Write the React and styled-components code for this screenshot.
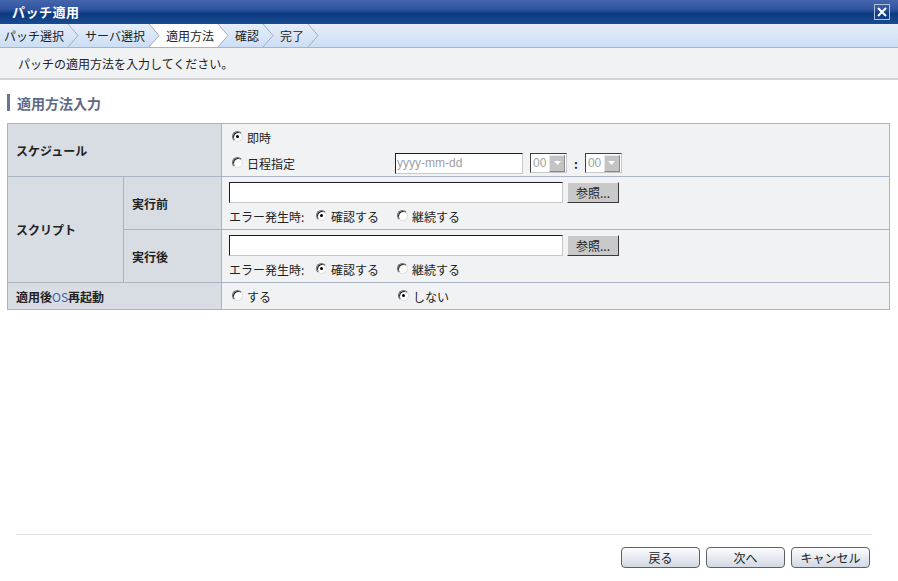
import React from 'react'
import styled, { createGlobalStyle } from 'styled-components'

const Global = createGlobalStyle`
  html, body { margin: 0; padding: 0; background: #ffffff; }
  body {
    font-family: "Noto Sans CJK JP", "DejaVu Sans", sans-serif;
    font-size: 12px;
    color: #222;
  }
  #root { height: 581px; }
`

const Page = styled.div`
  height: 581px;
  display: flex;
  flex-direction: column;
`

const TitleBar = styled.div`
  height: 23px;
  display: flex;
  align-items: center;
  justify-content: space-between;
  padding: 0 8px 0 12px;
  background: linear-gradient(#4466ad 0%, #2f55a0 40%, #0c3a80 60%, #184a90 100%);
  border-bottom: 1px solid #30466f;
`

const Title = styled.div`
  color: #ffffff;
  font-weight: bold;
  font-size: 13px;
  letter-spacing: 0.5px;
`

const CloseBox = styled.div`
  width: 14px;
  height: 14px;
  border: 1px solid #b4c2dc;
  display: flex;
  align-items: center;
  justify-content: center;
`

const Crumbs = styled.div`
  height: 23px;
  display: flex;
  align-items: stretch;
  background: linear-gradient(#e5eef9, #ccdef5);
  border-bottom: 1px solid #a9b3c3;
`

const Crumb = styled.div`
  display: flex;
  align-items: center;
  padding: 0 3px 0 ${p => (p.$first ? 4 : 6)}px;
  background: ${p => (p.$active ? '#ffffff' : 'transparent')};
  color: #222;
  white-space: nowrap;
`

const Message = styled.div`
  height: 30px;
  display: flex;
  align-items: center;
  padding-left: 18px;
  background: #f1f2f4;
  border-bottom: 2px solid #d2d4d6;
`

const Main = styled.div`
  flex: 1;
  padding: 14px 8px 0 7px;
`

const SectionTitle = styled.div`
  display: flex;
  align-items: center;
  height: 17px;
  border-left: 3px solid #6b7591;
  padding-left: 7px;
  color: #5e6985;
  font-weight: bold;
  font-size: 14px;
  margin-bottom: 12px;
`

const Table = styled.table`
  width: 100%;
  border-collapse: collapse;
  table-layout: fixed;
`

const Th = styled.th`
  background: #d8dce3;
  border: 1px solid #abb4c3;
  text-align: left;
  font-weight: bold;
  padding: 0 0 0 8px;
  height: ${p => (p.$h ? p.$h + 'px' : 'auto')};
  color: #222;
`

const Td = styled.td`
  background: #f1f2f4;
  border: 1px solid #abb4c3;
  padding: 0 0 0 7px;
  height: ${p => (p.$h ? p.$h + 'px' : 'auto')};
  vertical-align: middle;
`

const Line = styled.div`
  display: flex;
  align-items: ${p => (p.$top ? 'flex-start' : 'center')};
  padding-top: ${p => (p.$top ? 3 : 0)}px;
  height: ${p => p.$h || 24}px;
  box-sizing: border-box;
`

const RadioItem = styled.label`
  display: inline-flex;
  align-items: center;
  width: ${p => (p.$w ? p.$w + 'px' : 'auto')};
  flex-shrink: 0;
  white-space: nowrap;
`

const RadioDot = styled.span`
  width: 9px;
  height: 9px;
  border-radius: 50%;
  border-top: 1px solid #6f6f6f;
  border-left: 1px solid #6f6f6f;
  border-right: 1px solid #e2e2e2;
  border-bottom: 1px solid #e2e2e2;
  background: #ffffff;
  box-shadow: inset 1px 1px 0 #2a2a2a;
  margin: 0 4px 2px 3px;
  display: inline-flex;
  align-items: center;
  justify-content: center;
  &::after {
    content: '';
    width: 3px;
    height: 3px;
    border-radius: 50%;
    background: ${p => (p.$on ? '#000' : 'transparent')};
  }
`

const Label = styled.span`
  width: ${p => p.$w}px;
  flex-shrink: 0;
`

const Gap = styled.span`
  width: ${p => p.$w}px;
  flex-shrink: 0;
`

const TextBox = styled.div`
  width: ${p => p.$w}px;
  height: 19px;
  background: #ffffff;
  border-top: 1px solid #1e1e1e;
  border-left: 1px solid #1e1e1e;
  border-right: 1px solid #c8c8c8;
  border-bottom: 1px solid #c8c8c8;
  color: #a0a0a8;
  display: flex;
  align-items: center;
  padding-left: 1px;
  font-family: "Liberation Sans", "Noto Sans", sans-serif;
  font-size: 12px;
`

const Select = styled.div`
  width: 32px;
  height: 18px;
  background: #ffffff;
  border-top: 1px solid #404040;
  border-left: 1px solid #404040;
  border-right: 1px solid #c8c8c8;
  border-bottom: 1px solid #c8c8c8;
  display: flex;
  align-items: center;
  justify-content: space-between;
  padding: 0 1px 0 2px;
  color: #a0a0a0;
  font-family: "Liberation Sans", sans-serif;
`

const SelectArrow = styled.span`
  width: 14px;
  height: 15px;
  background: #c4c4c4;
  border: 1px solid #e8e8e8;
  border-right-color: #888;
  border-bottom-color: #888;
  display: flex;
  align-items: center;
  justify-content: center;
`

const Colon = styled.span`
  font-weight: bold;
  margin: 0 7px;
`

const BrowseButton = styled.button`
  width: 52px;
  height: 21px;
  margin-left: 4px;
  background: #c9c9c9;
  border: 1px solid;
  border-color: #f4f4f4 #3a3a3a #3a3a3a #f4f4f4;
  font-family: "Noto Sans CJK JP", sans-serif;
  font-size: 12px;
  color: #222;
  padding: 0;
`

const OsText = styled.span`
  color: #3a5fa8;
  font-weight: normal;
`

const Footer = styled.div`
  padding: 0 26px 13px 16px;
`

const Divider = styled.div`
  height: 1px;
  background: #d9dfe2;
  margin-bottom: 12px;
`

const Buttons = styled.div`
  display: flex;
  justify-content: flex-end;
  gap: 6px;
  padding-right: 2px;
`

const PushButton = styled.button`
  width: 79px;
  height: 21px;
  border: 1px solid #5a5f6a;
  border-radius: 4px;
  background: linear-gradient(#fdfdfe, #e4e8ef 55%, #d3d9e3);
  font-family: "Noto Sans CJK JP", sans-serif;
  font-size: 12px;
  color: #222;
  padding: 0;
`

const Chevron = ({ left, right }) => (
  <svg width="12" height="23" viewBox="0 0 12 23" style={{ flexShrink: 0 }}>
    {left && <polygon points="0,0 1,0 11,11.5 1,23 0,23" fill="#ffffff" />}
    {right && <polygon points="1,0 12,0 12,23 1,23 11,11.5" fill="#ffffff" />}
    <polyline points="1,0 11,11.5 1,23" fill="none" stroke="#a3abbb" strokeWidth="1" />
  </svg>
)

const Radio = ({ on, w, children }) => (
  <RadioItem $w={w}>
    <RadioDot $on={on} />
    {children}
  </RadioItem>
)

const DropArrow = () => (
  <SelectArrow>
    <svg width="7" height="4" viewBox="0 0 7 4"><polygon points="0,0 7,0 3.5,4" fill="#ffffff" /></svg>
  </SelectArrow>
)

const steps = ['パッチ選択', 'サーバ選択', '適用方法', '確認', '完了']
const activeStep = 2

const ScriptCell = () => (
  <Td $h={52}>
    <Line $h={27} $top>
      <TextBox $w={331} />
      <BrowseButton>参照...</BrowseButton>
    </Line>
    <Line $h={22}>
      <Label $w={84}>エラー発生時:</Label>
      <Radio on w={81}>確認する</Radio>
      <Radio>継続する</Radio>
    </Line>
  </Td>
)

export default function App() {
  return (
    <Page>
      <Global />
      <TitleBar>
        <Title>パッチ適用</Title>
        <CloseBox>
          <svg width="10" height="10" viewBox="0 0 10 10">
            <path d="M1 1 L9 9 M9 1 L1 9" stroke="#ffffff" strokeWidth="2" />
          </svg>
        </CloseBox>
      </TitleBar>
      <Crumbs>
        {steps.map((s, i) => (
          <React.Fragment key={s}>
            <Crumb $first={i === 0} $active={i === activeStep}>{s}</Crumb>
            <Chevron left={i === activeStep} right={i + 1 === activeStep} />
          </React.Fragment>
        ))}
      </Crumbs>
      <Message>パッチの適用方法を入力してください。</Message>
      <Main>
        <SectionTitle>適用方法入力</SectionTitle>
        <Table>
          <colgroup>
            <col style={{ width: 116 }} />
            <col style={{ width: 98 }} />
            <col />
          </colgroup>
          <tbody>
            <tr>
              <Th colSpan={2} $h={52}>スケジュール</Th>
              <Td $h={52}>
                <Line $h={26}>
                  <Radio on>即時</Radio>
                </Line>
                <Line $h={26}>
                  <Radio w={166}>日程指定</Radio>
                  <TextBox $w={125}>yyyy-mm-dd</TextBox>
                  <Gap $w={7} />
                  <Select>
                    00
                    <DropArrow />
                  </Select>
                  <Colon>:</Colon>
                  <Select>
                    00
                    <DropArrow />
                  </Select>
                </Line>
              </Td>
            </tr>
            <tr>
              <Th rowSpan={2}>スクリプト</Th>
              <Th>実行前</Th>
              <ScriptCell />
            </tr>
            <tr>
              <Th>実行後</Th>
              <ScriptCell />
            </tr>
            <tr>
              <Th colSpan={2} $h={26}>
                適用後<OsText>OS</OsText>再起動
              </Th>
              <Td $h={26}>
                <Line $h={26}>
                  <Radio w={166}>する</Radio>
                  <Radio on>しない</Radio>
                </Line>
              </Td>
            </tr>
          </tbody>
        </Table>
      </Main>
      <Footer>
        <Divider />
        <Buttons>
          <PushButton>戻る</PushButton>
          <PushButton>次へ</PushButton>
          <PushButton>キャンセル</PushButton>
        </Buttons>
      </Footer>
    </Page>
  )
}
